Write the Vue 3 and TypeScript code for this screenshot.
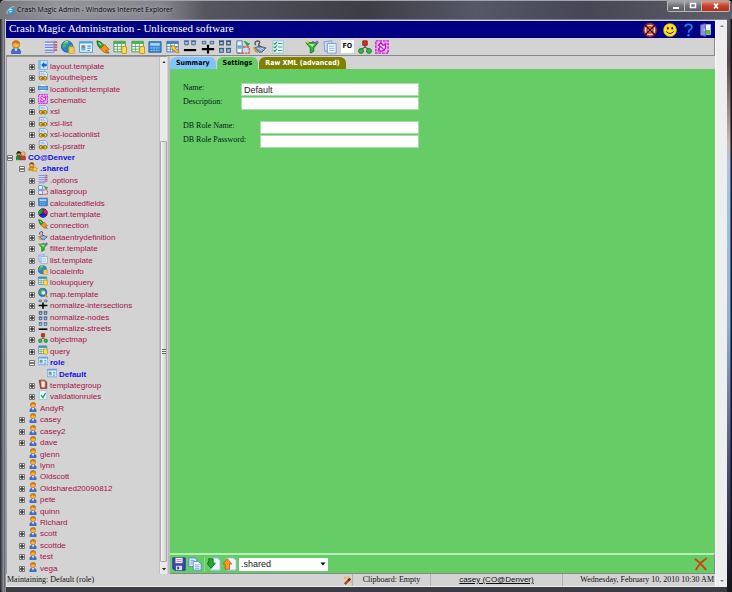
<script setup lang="ts">
import { ref } from 'vue'

interface TreeNode {
  name: string
  icon: string
  level: number
  mark: '+' | '-' | ''
  active?: boolean
}

const item = (name: string, icon: string): TreeNode => ({ name, icon, level: 3, mark: '+' })
const user = (name: string, mark: '+' | '' = '+'): TreeNode => ({ name, icon: 'person', level: 2, mark })

const nodes: TreeNode[] = [
  item('layout.template', 'layout'),
  item('layouthelpers', 'xsl'),
  item('locationlist.template', 'location'),
  item('schematic', 'schematic'),
  item('xsl', 'xsl'),
  item('xsl-list', 'xsl'),
  item('xsl-locationlist', 'xsl'),
  item('xsl-psrattr', 'xsl'),
  { name: 'CO@Denver', icon: 'people', level: 1, mark: '-', active: true },
  { name: '.shared', icon: 'shared', level: 2, mark: '-', active: true },
  item('.options', 'options'),
  item('aliasgroup', 'alias'),
  item('calculatedfields', 'calc'),
  item('chart.template', 'chart'),
  item('connection', 'plug'),
  item('dataentrydefinition', 'entry'),
  item('filter.template', 'filter'),
  item('list.template', 'list'),
  item('localeinfo', 'globe'),
  item('lookupquery', 'table'),
  item('map.template', 'map'),
  item('normalize-intersections', 'intersections'),
  item('normalize-nodes', 'nodes'),
  item('normalize-streets', 'streets'),
  item('objectmap', 'object'),
  item('query', 'table'),
  { name: 'role', icon: 'card', level: 3, mark: '-', active: true },
  { name: 'Default', icon: 'card', level: 4, mark: '', active: true },
  item('templategroup', 'clipboard'),
  item('validationrules', 'check'),
  user('AndyR', ''),
  user('casey'),
  user('casey2'),
  user('dave'),
  user('glenn', ''),
  user('lynn'),
  user('Oldscott'),
  user('Oldshared20090812'),
  user('pete'),
  user('quinn'),
  user('Richard', ''),
  user('scott'),
  user('scottde'),
  user('test'),
  user('vega'),
]

const tools: string[] = [
  'person', '', 'options', 'globe', 'card', 'plug', 'table', 'table', 'calc', 'tablequery',
  'streets', 'intersections', 'nodes', 'alias', 'entry', 'validate', '', 'filter', 'list', 'fo',
  'object', 'schematic',
]

const name = ref('Default')
const description = ref('')
const roleName = ref('')
const rolePassword = ref('')
const owner = ref('.shared')
</script>

<template>
  <svg class="defs" aria-hidden="true">
    <symbol id="person" viewBox="0 0 16 16">
      <path d="M3 15.500Q2 9.500 8 9.500T13 15.500Z" fill="#3d6fd0" stroke="#2448a0" stroke-width=".8" />
      <path d="M6 9.500h4l-2 4z" fill="#dfe9ff" />
      <circle cx="8" cy="5" r="4.200" fill="#f7b04a" stroke="#a8650c" stroke-width=".8" />
      <path d="M3.700 5Q3.500.700 8 .600T12.300 4.500Q9 4.500 7 3 6 4.800 3.700 5Z" fill="#c77a12" />
    </symbol>
    <symbol id="shared" viewBox="0 0 16 16">
      <path d="M1 13Q1 8 6 8T11 13Z" fill="#f0a030" stroke="#8b5a10" />
      <circle cx="6" cy="4.500" r="3.700" fill="#f7b04a" stroke="#8b5a10" />
      <path d="M2.500 4Q3 .800 6 .800T9.600 4Q6 4 5 3Z" fill="#8a5208" />
      <path d="M11 7l1.400 2.800 3.200.400-2.300 2.200.600 3.200-2.900-1.500-2.900 1.500.600-3.200-2.300-2.200 3.200-.400Z" fill="#ffd23c" stroke="#b87c00" stroke-width=".7" />
    </symbol>
    <symbol id="people" viewBox="0 0 16 16">
      <path d="M0 14V9Q1 7 4 7t4 2v5Z" fill="#1a8a38" stroke="#083" />
      <path d="M7 14V9q1-2 4-2t4 2v5Z" fill="#d33a22" stroke="#822" />
      <circle cx="4.500" cy="4.500" r="3.300" fill="#e8a040" stroke="#222" />
      <circle cx="11.500" cy="4.500" r="3.300" fill="#f7c060" stroke="#964" />
      <path d="M1 4q0-3.500 3.500-3.500T8 4Z" fill="#222" />
    </symbol>
    <symbol id="layout" viewBox="0 0 16 16">
      <path d="M1 1h14v14H1Z" fill="#cfe6ff" stroke="#5a98dc" />
      <path d="M1.500 1.500h3v13h-3Z" fill="#7cb8f0" />
      <path d="M5 8l5-5v3h4v4h-4v3Z" fill="#1f62c4" />
    </symbol>
    <symbol id="xsl" viewBox="0 0 16 16">
      <path d="M2 1h10l3 3v9H2Z" fill="#dce9ff" stroke="#6088c8" />
      <path d="M4 4h6M4 6h8" stroke="#88a8dc" />
      <circle cx="5" cy="11.500" r="3" fill="#f2c33c" stroke="#9a6e08" stroke-width="1.500" />
      <circle cx="11" cy="11.500" r="3" fill="#f2c33c" stroke="#9a6e08" stroke-width="1.500" />
      <path d="M5 11.500h6" stroke="#7d5a08" stroke-width="1.500" />
    </symbol>
    <symbol id="location" viewBox="0 0 16 16">
      <path d="M3 2h10v12H3Z" fill="#f4f9ff" stroke="#9bbfe6" />
      <path d="M0 5.500h16v5H0Z" fill="#4f97da" stroke="#2766ac" />
      <path d="M1.500 8h13" stroke="#b8dcf8" />
    </symbol>
    <symbol id="schematic" viewBox="0 0 16 16">
      <path d="M1 1h14v14H1Z" fill="#f4b4f6" stroke="#c020cc" stroke-width="1.600" stroke-dasharray="3 1" />
      <path d="M4 6l3-3 2 3 3-1v4l-2 3-4 1-2-3 2-2Z" fill="#fbe2ff" stroke="#b814c8" stroke-width="1.500" />
      <path d="M6 7l5 5M11 3l2 2M3 12l2 1" stroke="#d020e0" stroke-width="1.600" />
    </symbol>
    <symbol id="options" viewBox="0 0 16 16">
      <path d="M1 2h12v12H1Z" fill="#e3e8fa" />
      <path d="M1 2.500h10M1 5.500h10M1 8.500h10M1 11.500h10M1 14h10" stroke="#7080cc" stroke-width="1.400" />
      <path d="M12 1.500h3v2h-3ZM12 4.500h3v2h-3ZM12 7.500h3v2h-3ZM12 10.500h3v2h-3Z" fill="#d85068" />
      <path d="M11.500 1v13" stroke="#5a68b8" />
    </symbol>
    <symbol id="alias" viewBox="0 0 16 16">
      <path d="M1 1h6v14H1Z" fill="#f2f7ff" stroke="#3c6cb8" />
      <path d="M1.500 6h5v4h-5Z" fill="#68a8e8" />
      <path d="M8 8h7v7H2" fill="none" stroke="#d84a32" stroke-width="1.500" stroke-dasharray="3 1" />
      <path d="M9 2q4-1 4 3M11 4l2 3 2.500-3Z" fill="#2ca03a" stroke="#2ca03a" stroke-width="1" />
      <path d="M9 9h5v5H9Z" fill="#c7dcf6" />
    </symbol>
    <symbol id="calc" viewBox="0 0 16 16">
      <path d="M1 2h14v12H1Z" fill="#3f8ad4" stroke="#2362a8" />
      <path d="M2.500 3.500h11v3h-11Z" fill="#a7d4f6" />
      <path d="M3 9h10M3 12h10" stroke="#8cc0ee" stroke-width="1.300" stroke-dasharray="2 1" />
    </symbol>
    <symbol id="chart" viewBox="0 0 16 16">
      <circle cx="8" cy="8" r="7" fill="#e01890" stroke="#111" />
      <path d="M8 8V1A7 7 0 0 0 2 11.500Z" fill="#18a038" />
      <path d="M8 8L2 11.500A7 7 0 0 0 14 11.500Z" fill="#1828d8" />
      <path d="M8 1v7l6 3.500M8 8l-6 3.500" fill="none" stroke="#111" />
    </symbol>
    <symbol id="plug" viewBox="0 0 16 16">
      <path d="M1 1l4 1 4 4-4 4-3-4Z" fill="#28a034" stroke="#0d6d1c" />
      <path d="M5 10l5-5 5 6-4 1 3 3-5-1Z" fill="#f79420" stroke="#b45c06" />
      <path d="M3 3l3 3" stroke="#a8e8a0" stroke-width="1.300" />
      <path d="M13 13l2 2" stroke="#666" stroke-width="1.500" />
    </symbol>
    <symbol id="entry" viewBox="0 0 16 16">
      <path d="M2 9l5-2 8 2-5 5H7Z" fill="#7696c8" stroke="#3d5a8c" />
      <path d="M5 9l5 3M8 8.500l4 2" stroke="#e4ecfa" />
      <path d="M3 6q-2-4 2-5 4 0 2 3t3 4" fill="none" stroke="#555" stroke-width="1.600" />
      <path d="M1 8l2 5 3 1" fill="none" stroke="#d89828" stroke-width="2" />
    </symbol>
    <symbol id="filter" viewBox="0 0 16 16">
      <path d="M1 3l5 6v6l4-2V9l5-6Z" fill="#38b438" stroke="#107818" />
      <path d="M4 4.500h7L8.500 8Z" fill="#a8ec90" />
      <circle cx="3" cy="2.500" r="1.500" fill="#e8c020" />
      <circle cx="13.500" cy="2.500" r="1.700" fill="#b050d8" />
      <circle cx="9" cy="2.500" r="1.300" fill="#3878d8" />
    </symbol>
    <symbol id="list" viewBox="0 0 16 16">
      <path d="M1 2l9-1v11l-8 1Z" fill="#c4d8fa" stroke="#7c9cd8" />
      <path d="M5 4h10v11H5Z" fill="#f3f8ff" stroke="#6d92d2" />
      <path d="M7 7h6M7 9.500h6M7 12h6" stroke="#8cacdf" />
    </symbol>
    <symbol id="globe" viewBox="0 0 16 16">
      <circle cx="7" cy="7.500" r="6.500" fill="#2e80cc" stroke="#175796" />
      <path d="M2 4q3-4 6-3l1 3-3 1-1 3-3 1ZM9 7l4-2v5l-4 3Z" fill="#48b858" />
      <path d="M4 3q2-2 4-1" stroke="#d4f0ff" fill="none" />
      <path d="M9 8h6v7H9Z" fill="#ffe07a" stroke="#c89418" />
      <path d="M9 10h6M9 12.500h6" stroke="#e0b030" />
    </symbol>
    <symbol id="map" viewBox="0 0 16 16">
      <circle cx="7.500" cy="7" r="6.500" fill="#2878c8" stroke="#17508c" />
      <path d="M2 4q3-4 7-3l2 4-4 6-5-2Z" fill="#40a850" />
      <circle cx="8.500" cy="7.500" r="3.500" fill="#dcf2ff" stroke="#5c88b0" />
      <path d="M11 10l4 5" stroke="#c88420" stroke-width="2.400" />
    </symbol>
    <symbol id="card" viewBox="0 0 16 16">
      <path d="M.500 2h15v12H.500Z" fill="#eaf5ff" stroke="#3c90dc" />
      <path d="M.500 2h15v2H.500Z" fill="#4ca0e8" />
      <path d="M2.500 6h5v6h-5Z" fill="#68b0ee" />
      <circle cx="5" cy="7.500" r="1.600" fill="#b87830" />
      <path d="M9.500 7h4M9.500 9.500h4M9.500 12h3" stroke="#3c90dc" stroke-width="1.200" />
    </symbol>
    <symbol id="table" viewBox="0 0 16 16">
      <path d="M1 1.500h13v12H1Z" fill="#fff" stroke="#2f9440" />
      <path d="M1 1.500h13v3H1Z" fill="#4cae52" />
      <path d="M1 7.500h13M1 10.500h13M5 2v11M9.500 2v11" stroke="#55a860" />
      <path d="M10 8q3-1.500 5.500 0v7q-3 1.200-5.500 0Z" fill="#ffdc58" stroke="#c08c10" />
    </symbol>
    <symbol id="query" viewBox="0 0 16 16">
      <path d="M1 1.500h13v12H1Z" fill="#f4fbe8" stroke="#2c70c0" />
      <path d="M1 1.500h13v3H1Z" fill="#3c88d4" />
      <path d="M1 7.500h13M1 10.500h13M5 2v11M9.500 2v11" stroke="#4ca060" />
      <path d="M9 7q3-1.500 6 0v7q-3 1.500-6 0Z" fill="#ffe048" stroke="#c09010" />
    </symbol>
    <symbol id="tablequery" viewBox="0 0 16 16">
      <path d="M1 1.500h13v12H1Z" fill="#fff" stroke="#2f68b8" />
      <path d="M1 1.500h13v3H1Z" fill="#3c7cc8" />
      <path d="M1 7.500h13M1 10.500h13M5 2v11M9.500 2v11" stroke="#588cc8" />
      <path d="M6 6l7 2-3 1 5 5-2 1-4-4-1 2Z" fill="#ffd84c" stroke="#b08010" />
    </symbol>
    <symbol id="streets" viewBox="0 0 16 16">
      <path d="M2 1.500h4v4H2ZM10 1.500h4v4h-4Z" fill="#a9c4e8" stroke="#345c94" />
      <path d="M1 1h6M9 1h6" stroke="#345c94" />
      <path d="M1 11.500h14" stroke="#000" stroke-width="2.500" />
    </symbol>
    <symbol id="intersections" viewBox="0 0 16 16">
      <path d="M1.500 1.500h4v3h-4ZM10.500 1.500h4v3h-4Z" fill="#a9c4e8" stroke="#345c94" />
      <path d="M1 10.500h14M8 5.500v10" stroke="#000" stroke-width="2.500" />
    </symbol>
    <symbol id="nodes" viewBox="0 0 16 16">
      <path d="M2 1.500h4v4H2ZM10 1.500h4v4h-4ZM2 10h4v4H2ZM10 10h4v4h-4Z" fill="#b4cce8" stroke="#2c5480" stroke-width="1.300" />
      <path d="M1 1h6M9 1h6M1 9.500h6M9 9.500h6" stroke="#2c5480" />
    </symbol>
    <symbol id="object" viewBox="0 0 16 16">
      <path d="M8 5v4M8 8L3.500 11M8 8l4.500 3" stroke="#555" stroke-width="1.300" />
      <path d="M5.500 1h5v5h-5Z" fill="#e02c20" stroke="#901408" />
      <circle cx="3.500" cy="12.500" r="2.800" fill="#38b440" stroke="#127820" />
      <circle cx="12.500" cy="12.500" r="2.800" fill="#38b440" stroke="#127820" />
    </symbol>
    <symbol id="clipboard" viewBox="0 0 16 16">
      <path d="M2 2h9l3 3v10H4Z" fill="#c83c28" stroke="#842010" />
      <path d="M5 4h6v9H6Z" fill="#fff" stroke="#c8a8a0" />
      <path d="M5 1h5v2H5Z" fill="#888" />
    </symbol>
    <symbol id="check" viewBox="0 0 16 16">
      <path d="M2 1h12v14H2Z" fill="#eaf6ff" stroke="#84b8d8" />
      <path d="M5 8l3 4 4-7" fill="none" stroke="#18a040" stroke-width="2" />
    </symbol>
    <symbol id="validate" viewBox="0 0 16 16">
      <path d="M2 1h12v14H2Z" fill="#e8f8fa" stroke="#90c4d0" />
      <path d="M3 3.500l1.500 1.500L7 2M3 7.500L4.500 9 7 6M3 11.500L4.500 13 7 10" fill="none" stroke="#209850" stroke-width="1.200" />
      <path d="M8 4h5M8 8h5M8 12h5" stroke="#4898b8" stroke-width="1.300" />
    </symbol>
  </svg>

  <div class="window">
    <header class="titlebar">
      <svg class="ie" viewBox="0 0 16 16" aria-hidden="true">
        <circle cx="8" cy="8" r="5" fill="#d8f0ff" stroke="#2c94e0" stroke-width="3" />
        <path d="M5 8.500h8" stroke="#2c94e0" stroke-width="2" />
        <path d="M2 14Q-1 11 6 5T15 2" fill="none" stroke="#f4d060" stroke-width="1.500" />
      </svg>
      <span class="caption">Crash Magic Admin - Windows Internet Explorer</span>
      <div class="winbuttons">
        <button type="button" aria-label="Minimize"><svg viewBox="0 0 10 8"><path d="M2 5h6v2H2Z" fill="#fff" /></svg></button>
        <button type="button" aria-label="Maximize"><svg viewBox="0 0 10 8"><path d="M2.500 1.500h5v4h-5Z" fill="none" stroke="#fff" stroke-width="1.500" /></svg></button>
        <button type="button" class="close" aria-label="Close"><svg viewBox="0 0 10 8"><path d="M3 1.500l4 5M7 1.500l-4 5" stroke="#fff" stroke-width="1.600" /></svg></button>
      </div>
    </header>

    <div class="page">
      <div class="app">
        <div class="banner">
          <h1>Crash Magic Administration - Unlicensed software</h1>
          <div class="banner-icons">
            <button type="button" aria-label="Cancel">
              <svg viewBox="0 0 16 16"><circle cx="8" cy="8" r="7" fill="#fbe4d8" stroke="#b83020" stroke-width="1.800" /><circle cx="8" cy="8" r="3.500" fill="none" stroke="#d84828" stroke-width="2" /><path d="M2 2l12 12M14 2L2 14" stroke="#301010" stroke-width="1.700" /></svg>
            </button>
            <button type="button" aria-label="Feedback">
              <svg viewBox="0 0 16 16"><circle cx="8" cy="8" r="7.500" fill="#ffe21c" stroke="#c89800" stroke-width=".6" /><ellipse cx="5.500" cy="6" rx="1" ry="1.600" fill="#222" /><ellipse cx="10.500" cy="6" rx="1" ry="1.600" fill="#222" /><path d="M3.500 9.500q4.500 5 9 0" fill="none" stroke="#222" stroke-width="1.100" /></svg>
            </button>
            <button type="button" class="narrow" aria-label="Help">
              <svg viewBox="2 0 12 16"><path d="M4 4.500Q4.500 1.500 8 1.500T12 4.500Q12 6.500 10 7.500T8 11" fill="none" stroke="#1484ec" stroke-width="2" /><circle cx="8" cy="14" r="1.400" fill="#1484ec" /></svg>
            </button>
            <button type="button" class="narrow" aria-label="Log out">
              <svg viewBox="2 0 13 16"><path d="M6 1.500h8.500v12H6Z" fill="#eef4ff" stroke="#a8b0e8" /><path d="M9 8h5v5H9Z" fill="#58c038" /><path d="M2.500 2l6-1.500v15l-6-1.500Z" fill="#8a8cdc" stroke="#5658b0" /><circle cx="7" cy="8" r=".8" fill="#fff" /></svg>
            </button>
          </div>
        </div>

        <div class="toolbar">
          <template v-for="(tool, i) in tools" :key="i">
            <button v-if="tool" type="button" :aria-label="tool">
              <span v-if="tool === 'fo'" class="fo">FO</span>
              <svg v-else viewBox="0 0 16 16"><use :href="'#' + tool" /></svg>
            </button>
            <span v-else></span>
          </template>
        </div>

        <div class="main">
          <nav class="tree" aria-label="Objects">
            <ul>
              <li v-for="node in nodes" :key="node.name" :class="['level-' + node.level, { active: node.active }]">
                <span class="expander">
                  <svg v-if="node.mark" viewBox="0 0 6 6">
                    <path d="M.500.500h5v5h-5Z" fill="#f4f4f4" stroke="#777" />
                    <path v-if="node.mark === '+'" d="M1 3h4M3 1v4" stroke="#000" />
                    <path v-else d="M1 3h4" stroke="#000" />
                  </svg>
                </span>
                <svg class="node-icon" viewBox="0 0 16 16">
                  <use :href="'#' + (node.icon === 'table' ? 'query' : node.icon)" />
                </svg>
                <a href="#">{{ node.name }}</a>
              </li>
            </ul>
            <div class="scroll">
              <svg viewBox="0 0 6 6"><path d="M1.500 4L3 2l1.500 2Z" fill="#222" /></svg>
              <span class="thumb"></span>
              <svg viewBox="0 0 6 6"><path d="M1 2h4L3 4.500Z" fill="#222" /></svg>
            </div>
          </nav>

          <section class="detail">
            <div class="tabs" role="tablist">
              <button type="button" class="tab summary" role="tab">Summary</button>
              <button type="button" class="tab settings" role="tab" aria-selected="true">Settings</button>
              <button type="button" class="tab raw" role="tab">Raw XML (advanced)</button>
            </div>

            <form class="form" @submit.prevent>
              <div class="group basic">
                <label for="name">Name:</label>
                <input id="name" v-model="name" type="text" />
                <label for="description">Description:</label>
                <input id="description" v-model="description" type="text" />
              </div>
              <div class="group database">
                <label for="role-name">DB Role Name:</label>
                <input id="role-name" v-model="roleName" type="text" />
                <label for="role-password">DB Role Password:</label>
                <input id="role-password" v-model="rolePassword" type="password" />
              </div>
            </form>

            <footer class="actions">
              <button type="button" aria-label="Save">
                <svg viewBox="0 0 16 16"><path d="M1 1h14v14H3l-2-2Z" fill="#3c48b4" stroke="#20288c" /><path d="M4 1h8v6H4Z" fill="#f4f4fa" /><path d="M5 3h6M5 5h6" stroke="#c07888" /><path d="M4.500 10h7v5h-7Z" fill="#d8daf0" /><path d="M6 11h2v3H6Z" fill="#303890" /></svg>
              </button>
              <button type="button" aria-label="Copy">
                <svg viewBox="0 0 16 16"><path d="M1 1h7l2 2v8H1Z" fill="#d4e6ff" stroke="#4c88d4" /><path d="M6 5h6l3 3v7H6Z" fill="#f2f8ff" stroke="#4c88d4" /><path d="M8 9h5M8 11h5M8 13h5M3 4h4M3 6h2M3 8h2" stroke="#78a8e4" /></svg>
              </button>
              <span class="divider"></span>
              <button type="button" aria-label="Import">
                <svg viewBox="0 0 16 16"><path d="M4 1h8l3 3v11H4Z" fill="#eef5ff" stroke="#94b8e8" /><path d="M2 2h5v5h2.500L4.800 13 0 7h2Z" fill="#28a828" stroke="#0c7010" /></svg>
              </button>
              <button type="button" aria-label="Export">
                <svg viewBox="0 0 16 16"><path d="M4 1h8l3 3v11H4Z" fill="#eef5ff" stroke="#94b8e8" /><path d="M2.500 14h5V8H10L5 2 0 8h2.500Z" fill="#fb9a28" stroke="#cc5c04" /></svg>
              </button>
              <span class="picker">
                <select v-model="owner" aria-label="Owner">
                  <option>.shared</option>
                </select>
                <svg viewBox="0 0 6 4"><path d="M.500.500h5L3 3.500Z" fill="#000" /></svg>
              </span>
              <button type="button" class="delete" aria-label="Delete">
                <svg viewBox="0 0 16 16"><path d="M1 2q7 5 13 13M14.500 1.500Q6 7 2 15" fill="none" stroke="#d83c08" stroke-width="2" /></svg>
              </button>
            </footer>
          </section>
        </div>

        <div class="status">
          <span class="message">Maintaining: Default (role)
            <svg viewBox="0 0 10 10"><path d="M2 9l6-6" stroke="#b04018" stroke-width="2.600" /><path d="M6 5l2-2" stroke="#703010" stroke-width="2.600" /><path d="M1 2h3M2.500.500v3M5 1h2M8 7h2" stroke="#f0b020" stroke-width="1.300" /></svg>
          </span>
          <span class="clip">Clipboard: Empty</span>
          <span class="who"><a href="#">casey (CO@Denver)</a></span>
          <time>Wednesday, February 10, 2010 10:30 AM</time>
        </div>
      </div>

      <div class="page-scroll">
        <svg viewBox="0 0 6 6"><path d="M1 4l2-2 2 2Z" fill="#777" /></svg>
        <svg viewBox="0 0 6 6"><path d="M1 2l2 2 2-2Z" fill="#777" /></svg>
      </div>
    </div>
  </div>
</template>

<style>
body {
  background: #16161e;
}
</style>

<style scoped>
* {
  box-sizing: border-box;
}

button {
  padding: 0;
  border: 0;
  background: none;
}

svg {
  display: block;
  flex: none;
}

.defs {
  position: absolute;
  width: 0;
  height: 0;
}

.window {
  display: flex;
  flex-direction: column;
  height: 100vh;
  padding: 0 5px 5px 6px;
  border-radius: 5px 5px 3px 3px;
  background:
    linear-gradient(#c8c8d0, #8a8a92) 5px 18px / 1px 100% no-repeat,
    linear-gradient(90deg, #26262c, #8a8c94 70%, #55565c) 0 0 / 5px 100% no-repeat,
    linear-gradient(90deg, transparent 60%, #14141c 80%) 100% 0 / 5px 100% no-repeat,
    linear-gradient(#6a6a74, #504848 10%, #c8b8b0 24%, #a8c4e8 28%, #8cb0e0 55%, #484c70 80%, #16161e) 100% 0 / 5px 100% no-repeat,
    #3c3c44;
}

.titlebar {
  display: flex;
  align-items: center;
  height: 19px;
  margin: 0 -5px 0 -6px;
  padding: 0 2px 0 6px;
  border-top: 1px solid #a4a4a8;
  border-radius: 5px 5px 0 0;
  background: linear-gradient(90deg, #77787e, #94959a 8%, #86878e 22%, #55565f 28%, #4a4a54 38%, #3d3d46 50%, #565866 65%, #464654 80%, #5e5f68);
  font: 7px/12px 'Open Sans', 'Noto Sans', sans-serif;
  color: #0a0a10;
}

.ie {
  width: 9px;
  height: 9px;
  margin-right: 2px;
}

.caption {
  flex: 1;
  text-shadow: 0 0 4px #ccc;
}

.winbuttons {
  display: flex;
  align-self: flex-start;
  overflow: hidden;
  border: 1px solid #b8b8be;
  border-top: 0;
  border-radius: 0 0 3px 3px;
}

.winbuttons button {
  display: flex;
  justify-content: center;
  align-items: center;
  width: 17px;
  height: 10px;
  border-right: 1px solid #bbb;
  background: linear-gradient(#a4a6ac, #707278 50%, #5c5e66);
}

.winbuttons .close {
  width: 27px;
  border: 0;
  background: linear-gradient(#e09880, #c84028 50%, #b03018);
}

.winbuttons svg {
  width: 10px;
  height: 8px;
}

.page {
  display: flex;
  flex: 1;
  min-height: 0;
  border-top: 1px solid #808088;
  background: #d3d3d3;
}

.app {
  display: flex;
  flex: 1;
  flex-direction: column;
  min-width: 0;
  padding-top: 1px;
}

.banner {
  display: flex;
  justify-content: space-between;
  height: 17px;
  padding: 0 4px 0 3px;
  background: #000080;
  color: #fff;
}

.banner h1 {
  margin: 0;
  font: 11px/14px 'Liberation Serif', serif;
}

.banner-icons {
  display: flex;
  align-items: center;
  gap: 6px;
}

.banner-icons svg {
  width: 14px;
  height: 14px;
}

.banner-icons .narrow svg {
  width: 11px;
}

.toolbar {
  display: grid;
  grid-template-columns: repeat(22, 1fr);
  align-items: center;
  height: 18px;
  padding: 0 323px 0 1px;
  border-right: 1px solid #888;
  border-bottom: 1px solid #888;
}

.toolbar button {
  display: flex;
  justify-content: center;
}

.toolbar svg {
  width: 14px;
  height: 14px;
}

.fo {
  width: 13px;
  height: 13px;
  background: #fff;
  font: bold 7px/13px 'DejaVu Sans Condensed', 'DejaVu Sans', sans-serif;
  color: #111;
}

.main {
  display: flex;
  flex: 1;
  min-height: 0;
}

.tree {
  display: flex;
  width: 161px;
  border-top: 1px solid #999;
  border-left: 1px solid #999;
}

.tree ul {
  display: flex;
  flex: 1;
  flex-direction: column;
  min-width: 0;
  margin: 0;
  padding: 4px 0 0;
  list-style: none;
}

.tree li {
  display: flex;
  flex: 1;
  align-items: center;
  min-height: 0;
  font: 8px/10px 'Liberation Sans', sans-serif;
}

.tree a {
  color: #a8104c;
  text-decoration: none;
  white-space: nowrap;
}

.tree .active a {
  color: #1010e8;
  font-weight: bold;
}

.level-2 {
  padding-left: 12px;
}

.level-3 {
  padding-left: 22px;
}

.level-4 {
  padding-left: 31px;
}

.expander {
  width: 9px;
}

.expander svg {
  width: 6px;
  height: 6px;
}

.node-icon {
  width: 10px;
  height: 10px;
  margin: 0 2px 4px 0;
}

.scroll {
  display: flex;
  flex-direction: column;
  align-items: center;
  width: 8px;
  padding: 2px 0;
  border-left: 1px solid #c0c0c0;
  background: #e9e9e9;
}

.scroll svg {
  width: 6px;
  height: 6px;
}

.thumb {
  display: flex;
  flex: 1;
  align-self: stretch;
  margin: 76px 0 4px;
  border: 1px solid #aaa;
  border-radius: 1px;
  background:
    repeating-linear-gradient(#666 0 1px, #eee 1px 2px) center / 4px 5px no-repeat,
    linear-gradient(90deg, #f6f6f6, #cfcfcf);
}

.detail {
  display: flex;
  flex: 1;
  flex-direction: column;
  min-width: 0;
  margin-left: 1px;
  border-left: 2px solid #bbb;
}

.tabs {
  display: flex;
  gap: 1px;
  height: 13px;
  padding-top: 1px;
}

.tab {
  padding: 0 6px;
  border-radius: 6px 6px 0 0;
  font: bold 7px/12px 'DejaVu Sans Condensed', 'DejaVu Sans', sans-serif;
  color: #000;
}

.summary {
  background: #80c4ff;
}

.settings {
  background: #66cc66;
}

.raw {
  background: #808000;
  color: #fff;
}

.form {
  display: flex;
  flex: 1;
  flex-direction: column;
  gap: 11px;
  padding: 14px 0 0 13px;
  background: #66cc66;
}

.group {
  display: grid;
  row-gap: 1px;
}

.basic {
  grid-template-columns: 58px 178px;
}

.database {
  grid-template-columns: 77px 159px;
}

.group label {
  font: 8px/9px 'Liberation Serif', serif;
  color: #021;
  white-space: nowrap;
}

.group input {
  height: 13px;
  padding: 0 2px;
  border: 1px solid #a8dca8;
  background: #fff;
  font: 9px/11px 'Liberation Sans', sans-serif;
  color: #222;
}

.actions {
  display: flex;
  align-items: center;
  gap: 2px;
  height: 21px;
  padding: 0 6px 0 2px;
  border-top: 2px solid #b4f0b4;
  border-right: 1px solid #888;
  border-bottom: 1px solid #888;
  background: #66cc66;
}

.actions button svg {
  width: 14px;
  height: 14px;
}

.divider {
  width: 1px;
  height: 15px;
  background: #92dc92;
}

.picker {
  display: flex;
  align-items: center;
  width: 89px;
  height: 13px;
  padding-right: 2px;
  background: #fff;
}

.picker select {
  flex: 1;
  height: 13px;
  padding: 0 2px;
  border: 0;
  appearance: none;
  background: #fff;
  font: 9px/13px 'Liberation Sans', sans-serif;
  color: #222;
}

.picker svg {
  width: 6px;
  height: 4px;
}

.delete {
  margin-left: auto;
}

.status {
  display: flex;
  height: 13px;
  border-bottom: 1px solid #eee;
  font: 8px/12px 'Liberation Serif', serif;
  color: #111;
  white-space: nowrap;
}

.status > span {
  border-right: 1px solid #b0b0b0;
}

.message {
  display: flex;
  justify-content: space-between;
  align-items: center;
  width: 347px;
  padding-left: 1px;
}

.message svg {
  width: 9px;
  height: 9px;
}

.clip {
  width: 78px;
  text-align: center;
}

.who {
  width: 132px;
  font-family: 'Liberation Sans', sans-serif;
  text-align: center;
}

.who a {
  color: #111;
}

time {
  flex: 1;
  padding-right: 1px;
  text-align: right;
}

.page-scroll {
  display: flex;
  flex-direction: column;
  justify-content: space-between;
  align-items: center;
  width: 12px;
  padding: 3px 0;
  border-left: 1px solid #fafafa;
  background: #eee;
}

.page-scroll svg {
  width: 6px;
  height: 6px;
}
</style>
